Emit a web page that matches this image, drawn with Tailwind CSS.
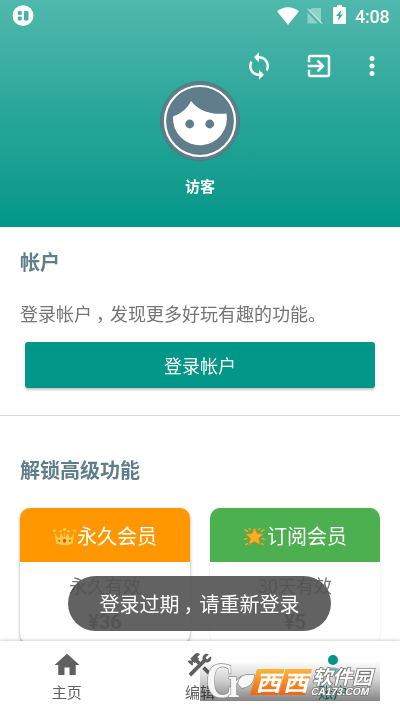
<!DOCTYPE html>
<html lang="zh-CN">
<head>
<meta charset="utf-8">
<title>账户</title>
<script src="https://cdn.jsdelivr.net/npm/@tailwindcss/browser@4"></script>
</head>
<body class="bg-white">
<div class="relative flex h-[711px] w-[400px] flex-col overflow-hidden bg-white font-['Noto_Sans_CJK_SC',sans-serif]">

  <header class="flex h-[227px] shrink-0 flex-col bg-linear-to-b from-[#50b8ac] via-[#27a699] via-50% to-[#009788] text-white">
    <div class="flex h-8 shrink-0 items-center pl-3 pr-[10px]">
      <svg class="size-[22px]" viewBox="0 0 22 22"><circle cx="11" cy="10.7" r="10.4" fill="#fff"/><g fill="#46b3a7"><rect x="5.800" y="6" width="4" height="4" rx="1"/><rect x="5.800" y="11.500" width="4" height="4" rx="1"/><rect x="12" y="6" width="4.500" height="9.600" rx="1"/></g></svg>
      <svg class="ml-auto h-[18px] w-[22px]" viewBox="0 0 22 18"><path d="M0 4.200Q11-3.600 22 4.200L11 18Z" fill="#fff"/></svg>
      <svg class="ml-[7px] h-[18px] w-[18px]" viewBox="0 0 18 18"><path d="M6 1h9v15.500L2.500 3.500ZM1.500 5.500v11h10.600Z" fill="#fff" opacity=".38"/><path d="m1.500 1.500 15 15.500" stroke="#fff" stroke-width="1.200" opacity=".45"/></svg>
      <svg class="ml-[9px] mt-[-3px] h-[19px] w-[13px]" viewBox="0 0 13 19"><path d="M4 0h5v2h3q1 0 1 1v15q0 1-1 1H1q-1 0-1-1V3q0-1 1-1h3Z" fill="#fff"/><path d="M8.500 4.500 3 11h3L4.800 16 10 9.500H7.200Z" fill="#3fb0a4"/></svg>
      <span class="ml-[9px] w-[35px] whitespace-nowrap pt-px font-[Roboto,sans-serif] text-[18px] font-medium leading-8 tracking-[-0.2px]">4:08</span>
    </div>
    <div class="flex h-[49px] shrink-0 items-start justify-end gap-[30px] pr-[13px] pt-[19px] *:shrink-0">
      <svg class="size-[30px]" viewBox="0 0 24 24" fill="#fff"><path d="M12 4V1L8 5l4 4V6c3.310 0 6 2.690 6 6 0 1.010-.25 1.970-.7 2.800l1.460 1.460A7.930 7.930 0 0 0 20 12c0-4.420-3.580-8-8-8zm0 14c-3.310 0-6-2.690-6-6 0-1.010.25-1.970.7-2.800L5.240 7.740A7.930 7.930 0 0 0 4 12c0 4.420 3.580 8 8 8v3l4-4-4-4v3z"/></svg>
      <svg class="size-[30px]" viewBox="0 0 24 24" fill="#fff"><path d="M10.090 15.590 11.500 17l5-5-5-5-1.410 1.410L12.670 11H3v2h9.670l-2.580 2.590zM19 3H5c-1.110 0-2 .9-2 2v4h2V5h14v14H5v-4H3v4c0 1.100.89 2 2 2h14c1.100 0 2-.9 2-2V5c0-1.100-.9-2-2-2z"/></svg>
      <svg class="-ml-[7px] size-[30px]" viewBox="0 0 24 24" fill="#fff"><circle cx="12" cy="6" r="2"/><circle cx="12" cy="12" r="2"/><circle cx="12" cy="18" r="2"/></svg>
    </div>
    <svg class="size-20 shrink-0 self-center" viewBox="0 0 80 80"><circle cx="40" cy="40" r="39.500" fill="#607d8b" stroke="#4b7b82"/><circle cx="40" cy="40" r="35" fill="none" stroke="#fff" stroke-width="2.200"/><path d="M13 35.500Q26 31 31 20Q43 35 66.500 32.500A27 27 0 1 1 13 35.500Z" fill="#fff"/><circle cx="29.700" cy="43" r="4.400" fill="#607d8b"/><circle cx="49.700" cy="43" r="4.400" fill="#607d8b"/></svg>
    <div class="mt-[15px] text-center text-[15px] font-bold leading-5">访客</div>
  </header>

  <main class="min-h-0 flex-1 overflow-hidden">
    <section class="h-[189px] border-b border-[#d9d9d9] px-5 pt-5">
      <h2 class="text-[20px] font-bold leading-[30px] text-[#607d8b]">帐户</h2>
      <p class="mt-[22px] h-7 whitespace-nowrap text-[18px] leading-7 text-[#757575]">登录帐户<span class="inline-block translate-x-[4px]">，</span>发现更多好玩有趣的功能。</p>
      <button class="mx-[5px] mt-[15px] block h-[46px] w-[350px] rounded-[3px] bg-[#009688] text-[18px] leading-[46px] text-white shadow-[0_2px_2px_rgba(0,0,0,0.22)]">登录帐户</button>
    </section>
    <section class="px-5 pt-[39px]">
      <h2 class="text-[20px] font-bold leading-[30px] text-[#607d8b]">解锁高级功能</h2>
      <div class="mt-[23px] flex gap-5 text-center">
        <article class="h-[136px] w-[170px] overflow-hidden rounded-[10px] bg-white shadow-[0_1px_3px_rgba(0,0,0,0.4)]">
          <div class="flex h-[54px] items-center justify-center bg-[#ff9800] pt-px text-[20px] text-white">
            <svg class="mr-px mt-[2px] h-[20px] w-[23px]" viewBox="0 0 24 20"><path d="M1 4 6 11 8.500 5 11 10 12 2 13 10 15.500 5 18 11 23 4 21 17Q12 21 3 17Z" fill="#ffc83d" stroke="#e99718" stroke-width=".7"/><g fill="#ffc83d"><circle cx="1.500" cy="3.500" r="1.500"/><circle cx="8" cy="4" r="1.300"/><circle cx="12" cy="2" r="1.700"/><circle cx="16" cy="4" r="1.300"/><circle cx="22.500" cy="3.500" r="1.500"/></g><circle cx="12" cy="14" r="1.900" fill="#d2523c"/><circle cx="6.500" cy="14" r="1.100" fill="#b5763a"/><circle cx="17.500" cy="14" r="1.100" fill="#b5763a"/></svg>永久会员
          </div>
          <div class="pt-[11px] text-[18px] leading-6 text-[#757575]">永久有效</div>
          <div class="mt-[11px] font-[Roboto,sans-serif] text-[20px] font-bold leading-7 text-[#757575]">¥36</div>
        </article>
        <article class="h-[136px] w-[170px] overflow-hidden rounded-[10px] bg-white shadow-[0_0_2px_rgba(0,0,0,0.14)]">
          <div class="flex h-[54px] items-center justify-center bg-[#4caf50] pt-px text-[20px] text-white">
            <svg class="mr-px mt-px h-[19px] w-[23px]" viewBox="0 0 23 20"><path d="M1.500 3 4.500 4.500M21.500 3l-3 1.500M1 13l2.500-1M22 13l-2.500-1M2.500 18.500l1.500-1M20.500 18.500l-1.500-1M6 1.500l1 1.200M17 1.500l-1 1.200" stroke="#f9a825" stroke-width="1.500" stroke-linecap="round"/><path d="m11.500 1 2.700 6 6.300.6-4.700 4.400 1.500 6.500-5.800-3.400-5.800 3.400L7.200 12 2.500 7.600 8.800 7Z" fill="#ffb020" stroke="#f18b20" stroke-width="1" stroke-linejoin="round"/></svg>订阅会员
          </div>
          <div class="pt-[11px] text-[18px] leading-6 text-[#757575]">30天有效</div>
          <div class="mt-[11px] font-[Roboto,sans-serif] text-[20px] font-bold leading-7 text-[#757575]">¥5</div>
        </article>
      </div>
    </section>
  </main>

  <nav class="z-10 grid h-[70px] shrink-0 grid-cols-3 bg-white text-[15px] leading-5 text-[#606060] shadow-[0_-1px_3px_rgba(0,0,0,0.18)]">
    <div class="flex flex-col items-center pt-[9px]">
      <svg class="size-[30px]" viewBox="0 0 24 24" fill="#606060"><path d="M10 20v-6h4v6h5v-8h3L12 3 2 12h3v8z"/></svg>
      <span class="mt-[2px]">主页</span>
    </div>
    <div class="flex flex-col items-center pt-[9px]">
      <svg class="size-[30px]" viewBox="0 0 24 24" fill="#606060"><path d="m13.780 15.170 2.120-2.120 5.450 5.450-2.120 2.120zM17.500 10c1.930 0 3.500-1.570 3.500-3.500 0-.58-.16-1.120-.41-1.600l-2.700 2.700-1.490-1.490 2.700-2.700c-.48-.25-1.020-.41-1.600-.41C15.570 3 14 4.570 14 6.500c0 .41.08.8.21 1.160l-1.850 1.850-1.780-1.780.71-.71-1.410-1.410L12 3.490a3 3 0 0 0-4.240 0L4.220 7.030l1.410 1.410H2.810l-.71.71 3.540 3.540.71-.71V9.150l1.410 1.410.71-.71 1.780 1.780-7.410 7.410 2.120 2.120L16.340 9.790c.36.13.75.21 1.160.21z"/></svg>
      <span class="mt-[2px]">编辑</span>
    </div>
    <div class="flex flex-col items-center pt-[9px] text-[#009688]">
      <svg class="size-[30px]" viewBox="0 0 24 24" fill="#009688"><circle cx="12" cy="8" r="4"/><path d="M12 14c-2.670 0-8 1.340-8 4v2h16v-2c0-2.660-5.330-4-8-4z" opacity=".5"/></svg>
      <span class="mt-[2px]">账户</span>
    </div>
  </nav>

  <div class="absolute left-[68px] top-[576px] z-20 flex h-[55px] w-[263px] items-center justify-center rounded-full bg-[#515151]/90 pt-px text-[20px] text-white"><span>登录过期<span class="inline-block translate-x-[4px]">，</span>请重新登录</span></div>

  <div class="absolute left-[200px] top-[661px] z-30 h-10 w-[180px] bg-linear-to-b from-white via-[#cecece] to-[#858585] mix-blend-multiply"></div>
  <div class="absolute left-[200px] top-[661px] z-40 h-10 w-[180px]">
    <svg class="h-10 w-[180px] overflow-visible" viewBox="0 0 180 40">
      <defs><linearGradient id="amber" x1="0" y1="0" x2="0" y2="1"><stop offset="0" stop-color="#ffb53b"/><stop offset="1" stop-color="#ee6414"/></linearGradient></defs>
      <g fill="#f7f7f7" stroke="#888" stroke-width="1.400" paint-order="stroke">
        <text x="6" y="36" font-family="Liberation Serif, serif" font-size="50" font-weight="bold" textLength="28" lengthAdjust="spacingAndGlyphs">C</text>
        <text x="28" y="36" font-family="Liberation Serif, serif" font-size="45" font-weight="bold" textLength="16" lengthAdjust="spacingAndGlyphs">r</text>
        <path d="M38 23Q39 12 54 14Q54 25 42 27Z"/>
      </g>
      <path d="M57 8H84.500L77.500 34H50Z" fill="url(#amber)"/>
      <path d="M85.500 8H112L105 34H78.500Z" fill="url(#amber)"/>
      <g font-family="Noto Sans CJK SC, sans-serif" font-weight="bold" fill="#fff">
        <g transform="translate(55.500 29.500) skewX(-14) scale(1.100 .95)"><text x="0" y="0" font-size="23">西</text><text x="25" y="0" font-size="23">西</text></g>
        <g transform="skewX(-14)" stroke="#777" stroke-width="1.500" paint-order="stroke">
          <text x="118" y="23" font-size="19" textLength="60" lengthAdjust="spacingAndGlyphs">软件园</text>
          <text x="119" y="34.500" font-family="Liberation Sans, sans-serif" font-size="10.500" font-weight="bold" textLength="58" lengthAdjust="spacingAndGlyphs">CA173.COM</text>
        </g>
      </g>
    </svg>
  </div>
</div>
</body>
</html>
